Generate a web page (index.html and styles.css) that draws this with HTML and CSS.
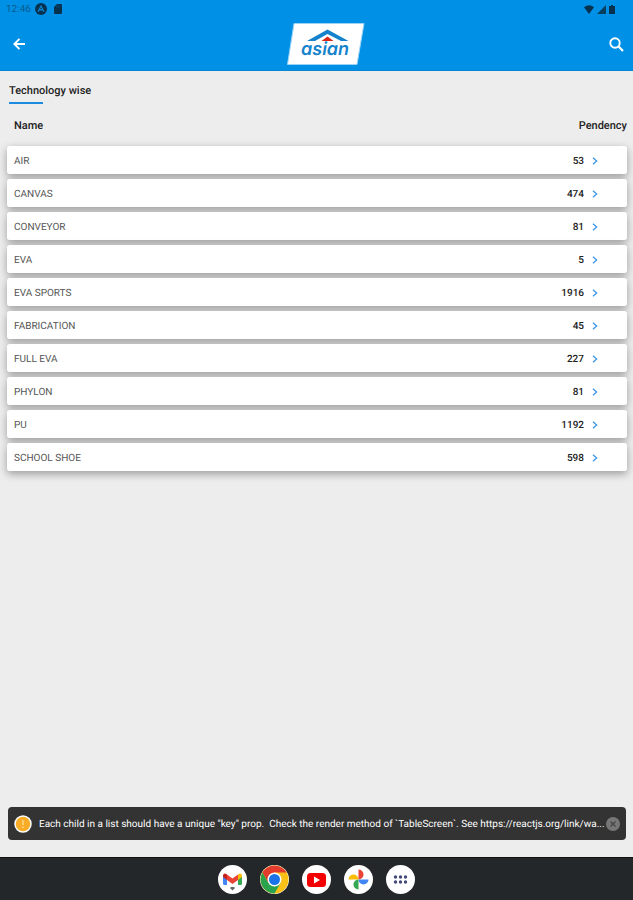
FILE: index.html
```html
<!DOCTYPE html>
<html lang="en">
<head>
    <title>Technology wise</title>
    <meta charset="UTF-8">
    <meta name="viewport" content="width=device-width, initial-scale=1">
    <link rel="stylesheet" href="styles.css">
</head>
<body>
    <header class="header">
        <div class="status-bar">
            <span class="clock">12:46</span>
            <svg class="status-icon app-icon" width="12" height="12" viewBox="0 0 12 12"><circle cx="6" cy="6" r="6" fill="#07324f"/><path d="M3 8.8L6 3l3 5.8M4.6 7.4L6 6.4l1.4 1" fill="none" stroke="#0a84cf" stroke-width="1.2"/></svg>
            <svg class="status-icon" width="8" height="10" viewBox="0 0 8 10"><path d="M3 0h4a1 1 0 0 1 1 1v8a1 1 0 0 1-1 1H1a1 1 0 0 1-1-1V3z" fill="#07324f"/><path d="M3 1.5v2M5 1.5v2" stroke="#0b5788" stroke-width=".8"/></svg>
            <span class="status-right">
                <svg width="10" height="9" viewBox="0 0 10 9"><path d="M0 2.2Q5-1.8 10 2.2L5 9z" fill="#07324f"/></svg>
                <svg width="9" height="9" viewBox="0 0 9 9"><path d="M0 9L9 0v9z" fill="#07405f"/></svg>
                <svg width="6" height="9" viewBox="0 0 6 9"><path d="M2 0h2v1h2v8H0V1h2z" fill="#07324f"/></svg>
            </span>
        </div>
        <div class="toolbar">
            <button class="icon-btn" aria-label="Back">
                <svg width="12" height="12" viewBox="0 0 12 12"><path d="M12 6H1.5M6.5 .8L1.3 6l5.2 5.2" fill="none" stroke="#fff" stroke-width="1.9"/></svg>
            </button>
            <svg class="logo" width="78" height="42" viewBox="0 0 78 42" role="img" aria-label="asian">
                <path d="M7 .5h70L70 41.500H.5z" fill="#fff" stroke="#9bd2f6"/>
                <path d="M20 18L40.500 6.500 61.500 18H54L40.500 11 28 18z" fill="#1583cc"/>
                <text class="logo-text" x="14" y="32">asian</text>
                <path d="M34.500 18l6-4.500 6 4.500z" fill="#d8271c"/>
            </svg>
            <button class="icon-btn" aria-label="Search">
                <svg width="15" height="15" viewBox="0 0 15 15"><circle cx="6" cy="6" r="4.700" fill="none" stroke="#fff" stroke-width="1.9"/><path d="M9.300 9.300l4.700 4.700" stroke="#fff" stroke-width="2.200"/></svg>
            </button>
        </div>
    </header>

    <main class="content">
        <h1 class="title">Technology wise</h1>
        <table class="list">
            <thead>
                <tr><th>Name</th><th class="count-head">Pendency</th></tr>
            </thead>
            <tbody id="rows"></tbody>
        </table>
    </main>

    <div class="toast" role="status">
        <svg class="toast-icon" width="18" height="18" viewBox="0 0 18 18"><circle cx="9" cy="9" r="8" fill="#f9ac26" stroke="#fff" stroke-width="1.500"/><path d="M9 5v5M9 11.500V13" stroke="#ffd88c" stroke-width="1.500"/></svg>
        <span class="toast-text">Each child in a list should have a unique "key" prop.  Check the render method of `TableScreen`. See https://reactjs.org/link/wa...</span>
        <button class="toast-close" aria-label="Dismiss">
            <svg width="14" height="14" viewBox="0 0 14 14"><circle cx="7" cy="7" r="7" fill="#777"/><path d="M4.500 4.500l5 5M9.500 4.500l-5 5" stroke="#444" stroke-width="1.200"/></svg>
        </button>
    </div>

    <nav class="dock">
        <button class="dock-btn" aria-label="Gmail">
            <svg width="29" height="29" viewBox="0 0 29 29">
                <path d="M5 10.500l4 3V20H6.500Q5 20 5 18.500z" fill="#4285f4"/>
                <path d="M24 10.500l-4 3V20h2.500q1.500 0 1.500-1.500z" fill="#34a853"/>
                <path d="M20 9.500q2-1.500 3.300-.500.7.600.7 1.500v1.500l-4 3z" fill="#fbbc04"/>
                <path d="M9 9.500q-2-1.500-3.300-.500Q5 9.600 5 10.500V12l4 3z" fill="#c5221f"/>
                <path d="M9 9.500l5.500 4.100L20 9.500V15l-5.500 4L9 15z" fill="#ea4335"/>
                <path d="M12.500 22h4v1.500l-2 2-2-2z" fill="#666"/>
            </svg>
        </button>
        <button class="dock-btn" aria-label="Chrome">
            <svg width="29" height="29" viewBox="0 0 29 29">
                <circle cx="14.500" cy="14.500" r="14" fill="#fbc116"/>
                <path d="M14.500 7.500h12.100A14 14 0 0 0 2.400 7.500l6 10.500z" fill="#e33b2e"/>
                <path d="M2.400 7.500A14 14 0 0 0 14.500 28.500L20.600 18l-6.100 3.500-6-3.500z" fill="#2ba24c"/>
                <circle cx="14.500" cy="14.500" r="7" fill="#fff"/>
                <circle cx="14.500" cy="14.500" r="5.500" fill="#1a73e8"/>
            </svg>
        </button>
        <button class="dock-btn" aria-label="YouTube">
            <svg width="29" height="29" viewBox="0 0 29 29"><rect x="5" y="8" width="19" height="14" rx="3.500" fill="#f50000"/><path d="M12 11.500v7l6-3.500z" fill="#fff"/></svg>
        </button>
        <button class="dock-btn" aria-label="Photos">
            <svg width="29" height="29" viewBox="0 0 29 29">
                <path d="M14.500 14.500V4.500a5 5 0 0 0 0 10z" fill="#ea4335" transform="matrix(-1 0 0 1 29 0)"/>
                <path d="M14.500 14.500h10a5 5 0 0 1-10 0z" fill="#4285f4"/>
                <path d="M14.500 14.500v10a5 5 0 0 1 0-10z" fill="#34a853"/>
                <path d="M14.500 14.500h-10a5 5 0 0 1 10 0z" fill="#fbbc04"/>
            </svg>
        </button>
        <button class="dock-btn" aria-label="All apps">
            <svg width="29" height="29" viewBox="0 0 29 29" fill="#434a78"><circle cx="9.500" cy="12" r="1.700"/><circle cx="14.500" cy="12" r="1.700"/><circle cx="19.500" cy="12" r="1.700"/><circle cx="9.500" cy="17" r="1.700"/><circle cx="14.500" cy="17" r="1.700"/><circle cx="19.500" cy="17" r="1.700"/></svg>
        </button>
    </nav>

    <script src="table.js"></script>
</body>
</html>
```

FILE: styles.css
```css
* { box-sizing: border-box; }
body { margin: 0; min-height: 100vh; display: flex; flex-direction: column; font-family: Roboto, sans-serif; font-size: 10px; background-color: #ededed; color: #222; text-rendering: geometricPrecision; }
button { padding: 0; border: none; background: none; cursor: pointer; }
svg { display: block; }

.header { background-color: #0091e6; border-bottom: 1px solid #0785d2; }
.status-bar { height: 18px; padding: 0 18px 0 6px; display: flex; align-items: center; }
.clock { color: #075b8f; }
.status-icon { margin-left: 7px; }
.app-icon { margin-left: 4px; }
.status-right { margin-left: auto; display: flex; align-items: center; gap: 3px; }
.toolbar { height: 52px; padding: 0 9px 0 13px; display: flex; align-items: center; justify-content: space-between; }
.logo { margin-left: 18px; }
.logo-text { font-family: Inter, sans-serif; font-size: 18px; font-weight: 600; font-style: italic; fill: #1583cc; }

.content { flex-grow: 1; padding: 13px 6px 0 7px; }
.title { margin: 0 2px; font-size: 11px; line-height: 14px; font-weight: 500; }
.title::after { content: ""; display: block; width: 34px; height: 2px; margin-top: 4px; background-color: #1c8be0; }

.list { width: 100%; border-collapse: separate; border-spacing: 0 5px; }
.list th { height: 32px; padding: 0 0 0 7px; font-size: 11px; font-weight: 500; text-align: left; }
.list .count-head { text-align: right; }
.list tbody tr { border-radius: 3px; box-shadow: 0 3px 8px rgba(0, 0, 0, 0.35); }
.list td { height: 28px; padding: 2px 0 0 7px; background-color: #fff; color: #555; }
.list td:first-child { border-radius: 3px 0 0 3px; }
.list td:last-child { border-radius: 0 3px 3px 0; }
.count { display: flex; align-items: center; justify-content: flex-end; gap: 8px; padding-right: 29px; font-weight: 500; color: #222; }

.toast { margin: 0 7px 18px 8px; height: 33px; padding: 0 6px; display: flex; align-items: center; border-radius: 4px; background-color: #333; }
.toast-icon { flex-shrink: 0; margin-right: 7px; }
.toast-text { flex: 1; min-width: 0; padding-top: 2px; overflow: hidden; white-space: pre; text-overflow: ellipsis; color: #fff; }

.dock { height: 42px; display: flex; align-items: center; justify-content: center; gap: 13px; background-color: #24272a; box-shadow: 0 -1px 0 #101112; }
.dock-btn { width: 29px; height: 29px; border-radius: 50%; background-color: #fff; }
```

FILE: table.js
```javascript
const rows = [
    ['AIR', 53],
    ['CANVAS', 474],
    ['CONVEYOR', 81],
    ['EVA', 5],
    ['EVA SPORTS', 1916],
    ['FABRICATION', 45],
    ['FULL EVA', 227],
    ['PHYLON', 81],
    ['PU', 1192],
    ['SCHOOL SHOE', 598]
];

document.getElementById('rows').innerHTML = rows.map(([name, count]) => `
    <tr>
        <td>${name}</td>
        <td><div class="count">${count}
            <button aria-label="Open ${name}"><svg width="6" height="8" viewBox="0 0 6 8"><path d="M1 .8L4.600 4 1 7.200" fill="none" stroke="#3a96e8" stroke-width="1.300"/></svg></button>
        </div></td>
    </tr>`).join('');
```
